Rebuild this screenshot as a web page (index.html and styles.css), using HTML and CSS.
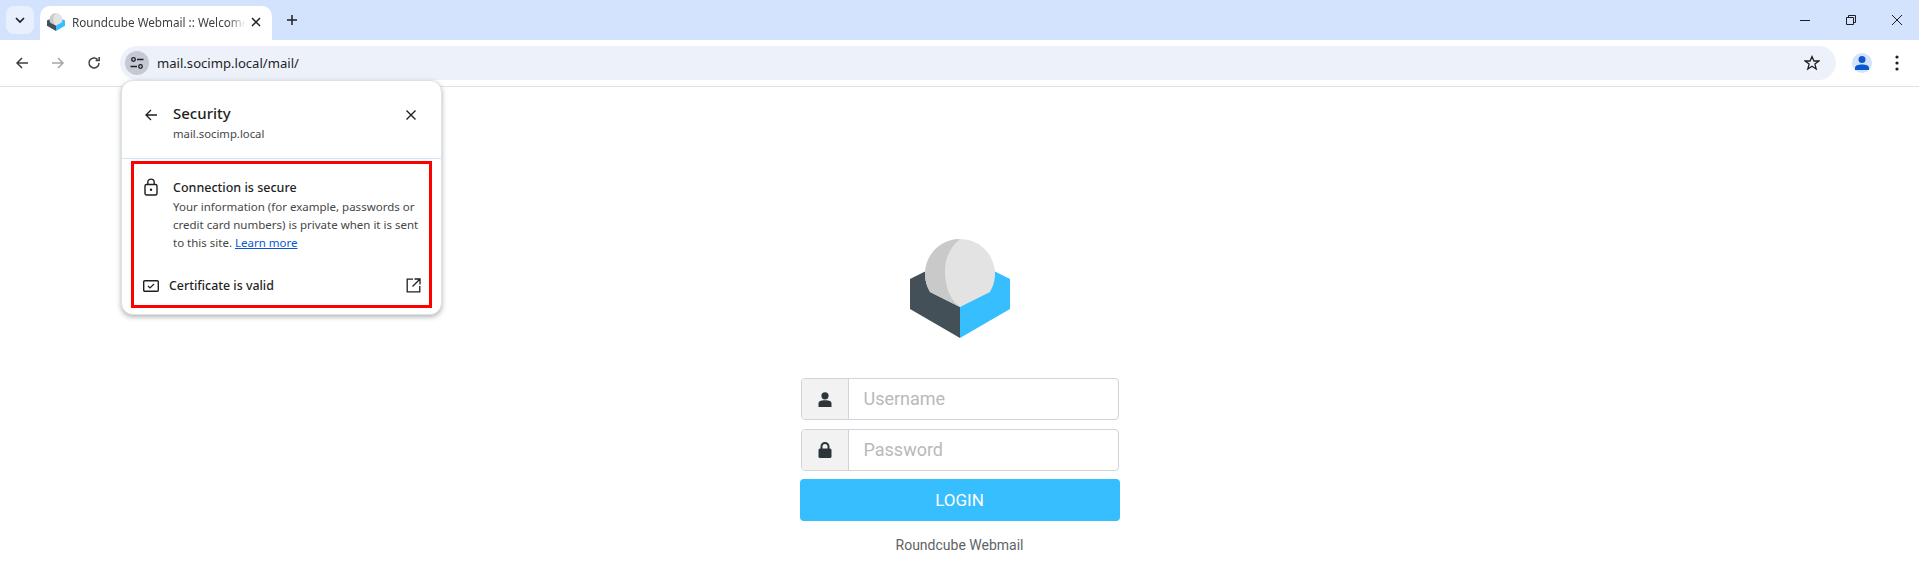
FILE: index.html
```html
<!DOCTYPE html>
<html lang="en">
<head>
    <meta charset="UTF-8">
    <title>Roundcube Webmail :: Welcome</title>
    <link rel="stylesheet" href="styles.css">
</head>
<body>

<svg class="defs" width="0" height="0">
    <symbol id="rc-logo" viewBox="0 0 100 100">
        <path fill="#435058" d="M0 41 16 33 50 69V100L0 71Z"/>
        <path fill="#37beff" d="M100 41 84 33 50 69V100L100 71Z"/>
        <path fill="#e3e3e3" d="M20 54A35 35 0 1 1 80 54L50 69Z"/>
        <path fill="#c9c9c9" d="M50 1A35 35 0 0 0 20 54L50 69C38 60 35 46 35 32 35 20 41 8 50 1Z"/>
    </symbol>
</svg>

<div class="tabstrip">
    <div class="tab-search">
        <svg width="12" height="12" viewBox="0 0 12 12"><path d="M2 4 6 8 10 4" fill="none" stroke="#1f1f1f" stroke-width="1.7"/></svg>
    </div>
    <div class="tab">
        <svg class="favicon" width="18" height="18"><use href="#rc-logo"/></svg>
        <span class="tab-title">Roundcube Webmail :: Welcome</span>
        <svg class="tab-close" width="10" height="10" viewBox="0 0 10 10"><path d="M1 1 9 9M9 1 1 9" stroke="#1f1f1f" stroke-width="1.5"/></svg>
    </div>
    <svg class="new-tab" width="12" height="12" viewBox="0 0 12 12"><path d="M6 1V11M1 6H11" stroke="#1f1f1f" stroke-width="1.5"/></svg>
    <div class="window-btns">
        <svg width="12" height="12" viewBox="0 0 12 12"><path d="M1 6.500H11" stroke="#1f1f1f"/></svg>
        <svg width="12" height="12" viewBox="0 0 12 12"><path d="M1.500 3.500H8.500V10.500H1.500ZM3.500 3.500V1.500H10.500V8.500H8.500" fill="none" stroke="#1f1f1f"/></svg>
        <svg width="12" height="12" viewBox="0 0 12 12"><path d="M1 1 11 11M11 1 1 11" stroke="#1f1f1f"/></svg>
    </div>
</div>

<div class="toolbar">
    <div class="nav-btns">
        <svg width="14" height="14" viewBox="0 0 14 14"><path d="M13 7H2M7 2 2 7 7 12" fill="none" stroke="#3c4043" stroke-width="1.500"/></svg>
        <svg width="14" height="14" viewBox="0 0 14 14"><path d="M1 7H12M7 2 12 7 7 12" fill="none" stroke="#a3a6ab" stroke-width="1.500"/></svg>
        <svg width="14" height="14" viewBox="0 0 14 14"><path d="M12 7A5 5 0 1 1 10.500 3.400M12.200 1V4.600H8.600" fill="none" stroke="#3c4043" stroke-width="1.500"/></svg>
    </div>
    <div class="omnibox">
        <div class="chip">
            <svg width="14" height="14" viewBox="0 0 14 14"><g fill="none" stroke="#1f1f1f" stroke-width="1.300"><circle cx="3.500" cy="3.500" r="1.800"/><circle cx="10.500" cy="10.500" r="1.800"/><path d="M7 3.500H13.500M0.500 10.500H7"/></g></svg>
        </div>
        <span class="url">mail.socimp.local/mail/</span>
        <svg class="star" width="16" height="16" viewBox="0 0 16 16"><path d="M8 1.600 9.900 6H14.800L10.900 9.100 12.200 14 8 11.300 3.800 14 5.100 9.100 1.200 6H6.100Z" fill="none" stroke="#1f1f1f" stroke-width="1.300"/></svg>
    </div>
    <div class="avatar">
        <svg width="16" height="16" viewBox="0 0 16 16"><circle cx="8" cy="4.500" r="3.500" fill="#0b57d0"/><path d="M1 15V13C1 10.500 4 9.500 8 9.500S15 10.500 15 13V15Z" fill="#0b57d0"/></svg>
    </div>
    <svg class="menu-dots" width="4" height="16" viewBox="0 0 4 16"><circle cx="2" cy="2" r="1.600"/><circle cx="2" cy="8" r="1.600"/><circle cx="2" cy="14" r="1.600"/></svg>
</div>

<div class="popup">
    <div class="popup-head">
        <svg width="14" height="14" viewBox="0 0 14 14"><path d="M13 7H2M7 2 2 7 7 12" fill="none" stroke="#1f1f1f" stroke-width="1.300"/></svg>
        <div class="popup-title">
            <h1>Security</h1>
            <p>mail.socimp.local</p>
        </div>
        <svg class="popup-close" width="12" height="12" viewBox="0 0 12 12"><path d="M1.500 1.500 10.500 10.500M10.500 1.500 1.500 10.500" stroke="#1f1f1f" stroke-width="1.400"/></svg>
    </div>
    <div class="popup-body">
        <div class="secure-row">
            <svg width="14" height="18" viewBox="0 0 14 18"><g fill="none" stroke="#1f1f1f" stroke-width="1.400"><rect x="1" y="6.500" width="12" height="10.500" rx="1.500"/><path d="M3.800 6.500V4.300A3.200 3.200 0 0 1 10.200 4.300V6.500"/></g><circle cx="7" cy="11.800" r="1.200" fill="#1f1f1f"/></svg>
            <div>
                <h2>Connection is secure</h2>
                <p>Your information (for example, passwords or credit card numbers) is private when it is sent to this site. <a href="#">Learn more</a></p>
            </div>
        </div>
        <div class="cert-row">
            <svg width="16" height="12" viewBox="0 0 16 12"><rect x="0.700" y="0.700" width="14.600" height="10.600" rx="1" fill="none" stroke="#1f1f1f" stroke-width="1.400"/><path d="M5 6 7 8 11 4" fill="none" stroke="#1f1f1f" stroke-width="1.200"/></svg>
            <span>Certificate is valid</span>
            <svg class="cert-open" width="15" height="15" viewBox="0 0 15 15"><path d="M7 1.200H1.200V13.800H13.800V8M8.500 1H14V6.500M14 1 6.500 8.500" fill="none" stroke="#1f1f1f" stroke-width="1.300"/></svg>
        </div>
    </div>
</div>

<main class="login">
    <svg class="logo" width="100" height="100"><use href="#rc-logo"/></svg>
    <form class="login-form">
        <div class="field">
            <span class="field-icon">
                <svg width="14" height="15" viewBox="0 0 14 15"><circle cx="7" cy="3.800" r="3.600" fill="#2c363a"/><path d="M0.500 15V11.500C0.500 9.500 2.500 8.300 7 8.300S13.500 9.500 13.500 11.500V15Z" fill="#2c363a"/></svg>
            </span>
            <span class="field-text">Username</span>
        </div>
        <div class="field">
            <span class="field-icon">
                <svg width="14" height="16" viewBox="0 0 14 16"><path d="M3.500 7V4.500A3.500 3.500 0 0 1 10.500 4.500V7" fill="none" stroke="#2c363a" stroke-width="2"/><rect x="0.500" y="6.500" width="13" height="9.500" rx="1.500" fill="#2c363a"/></svg>
            </span>
            <span class="field-text">Password</span>
        </div>
        <div class="login-btn">LOGIN</div>
    </form>
    <div class="login-foot">Roundcube Webmail</div>
</main>

</body>
</html>
```

FILE: styles.css
```css
* {
    box-sizing: border-box;
}

html, body {
    height: 100%;
}

body {
    margin: 0;
    font-family: "Noto Sans", sans-serif;
    background-color: #fff;
    color: #1f1f1f;
    overflow: hidden;
}

.defs {
    display: block;
    height: 0;
}

/* tab strip */
.tabstrip {
    display: flex;
    align-items: flex-end;
    height: 40px;
    padding-left: 6px;
    background-color: #d3e3fd;
}

.tab-search {
    display: flex;
    align-items: center;
    justify-content: center;
    width: 28px;
    height: 28px;
    margin-bottom: 6px;
    margin-right: 6px;
    border-radius: 8px;
    background-color: #e8f0fe;
}

.tab {
    display: flex;
    align-items: center;
    width: 232px;
    height: 34px;
    padding: 0 11px 2px 7px;
    border-radius: 10px 10px 0 0;
    background-color: #fff;
}

.favicon {
    flex: none;
    margin-right: 7px;
}

.tab-title {
    flex: 1;
    overflow: hidden;
    white-space: nowrap;
    font-size: 11.700px;
    color: #3c4043;
    -webkit-mask-image: linear-gradient(to right, #000 88%, transparent 98%);
    mask-image: linear-gradient(to right, #000 88%, transparent 98%);
}

.tab-close {
    flex: none;
    margin-left: 2px;
}

.new-tab {
    margin: 0 0 14px 14px;
}

.window-btns {
    display: flex;
    gap: 34px;
    margin-left: auto;
    margin-right: 16px;
    margin-bottom: 14px;
}

/* toolbar */
.toolbar {
    display: flex;
    align-items: center;
    height: 47px;
    padding-bottom: 1px;
    border-bottom: 1px solid #dfe1e5;
    border-radius: 10px 10px 0 0;
    background-color: #fff;
}

.nav-btns {
    display: flex;
    gap: 22px;
    margin-left: 15px;
    margin-right: 19px;
}

.omnibox {
    display: flex;
    align-items: center;
    flex: 1;
    height: 34px;
    padding-left: 5px;
    padding-right: 16px;
    border-radius: 17px;
    background-color: #edf2fa;
}

.chip {
    display: flex;
    align-items: center;
    justify-content: center;
    width: 24px;
    height: 24px;
    margin-right: 8px;
    border-radius: 50%;
    background-color: #c4c9d4;
}

.url {
    font-size: 13.100px;
}

.star {
    margin-left: auto;
}

.avatar {
    display: flex;
    align-items: center;
    justify-content: center;
    width: 20px;
    height: 20px;
    margin-left: 16px;
    border-radius: 50%;
    background-color: #d3e3fd;
}

.menu-dots {
    margin-left: 23px;
    margin-right: 20px;
    fill: #1f1f1f;
}

/* security popup */
.popup {
    position: absolute;
    left: 121px;
    top: 80px;
    width: 321px;
    height: 235px;
    border: 1px solid #dfe1e5;
    border-radius: 12px;
    background-color: #fff;
    box-shadow: 0 2px 5px rgba(60, 64, 67, 0.4);
}

.popup-head {
    display: flex;
    align-items: flex-start;
    height: 78px;
    padding: 21px 24px 0 22px;
    border-bottom: 1px solid #d3e3fd;
}

.popup-head > svg {
    margin-top: 6px;
}

.popup-head > .popup-close {
    margin-top: 7px;
}

.popup-title {
    margin-left: 15px;
}

.popup-title h1 {
    margin: 0;
    font-size: 15px;
    font-weight: 500;
    line-height: 23px;
}

.popup-title p {
    margin: 0;
    font-size: 11.300px;
    line-height: 18px;
    color: #444746;
}

.popup-close {
    margin-left: auto;
}

.popup-body {
    height: 147px;
    margin: 2px 9px 0;
    border: 3px solid #f00;
}

.secure-row {
    display: flex;
    padding: 14px 8px 0 10px;
}

.secure-row > svg {
    flex: none;
    margin-right: 15px;
}

.secure-row h2 {
    margin: 0;
    font-size: 12.500px;
    font-weight: 500;
    line-height: 20px;
}

.secure-row p {
    margin: 0;
    font-size: 11.500px;
    line-height: 18px;
    color: #444746;
}

.secure-row a {
    color: #0b57d0;
}

.cert-row {
    display: flex;
    align-items: center;
    margin-top: 25px;
    padding: 0 8px 0 9px;
}

.cert-row span {
    margin-left: 10px;
    font-size: 12.400px;
    font-weight: 500;
}

.cert-open {
    margin-left: auto;
}

/* login page */
.login {
    display: flex;
    flex-direction: column;
    align-items: center;
    padding-top: 151px;
    font-family: Roboto, sans-serif;
}

.logo {
    display: block;
    margin-bottom: 40px;
}

.login-form {
    display: flex;
    flex-direction: column;
    width: 320px;
}

.field {
    display: flex;
    align-items: stretch;
    height: 42px;
    margin: 0 1px 9px;
    border: 1px solid #ced4da;
    border-radius: 4px;
    font-size: 18px;
    color: #b9b9b9;
}

.field-icon {
    display: flex;
    align-items: center;
    justify-content: center;
    width: 47px;
    border-right: 1px solid #ced4da;
    border-radius: 3px 0 0 3px;
    background-color: #f2f2f3;
}

.field-text {
    padding-left: 15px;
    line-height: 40px;
}

.login-btn {
    height: 42px;
    margin-top: -1px;
    border-radius: 4px;
    background-color: #37beff;
    color: #fff;
    font-size: 17px;
    line-height: 42px;
    text-align: center;
}

.login-foot {
    margin-top: 16px;
    font-size: 14px;
    color: #5f6368;
}
```
